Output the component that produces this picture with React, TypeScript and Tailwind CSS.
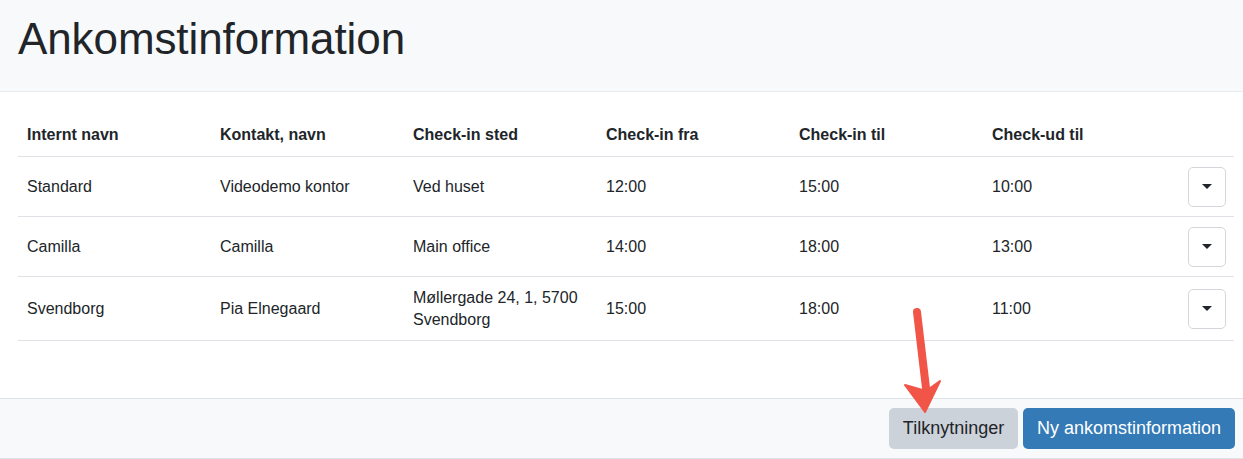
const rows = [
  { name: "Standard", contact: "Videodemo kontor", place: "Ved huset", from: "12:00", to: "15:00", out: "10:00" },
  { name: "Camilla", contact: "Camilla", place: "Main office", from: "14:00", to: "18:00", out: "13:00" },
  { name: "Svendborg", contact: "Pia Elnegaard", place: "Møllergade 24, 1, 5700 Svendborg", from: "15:00", to: "18:00", out: "11:00" },
];

const headers = ["Internt navn", "Kontakt, navn", "Check-in sted", "Check-in fra", "Check-in til", "Check-ud til"];

export default function App() {
  return (
    <div
      className="relative flex h-[459px] w-full flex-col bg-white text-[#212529]"
      style={{ fontFamily: '"Liberation Sans", Arial, sans-serif' }}
    >
      {/* Header */}
      <div className="h-[92px] shrink-0 border-b border-[#e9ecef] bg-[#f8f9fb] px-[18px] pt-[13px]">
        <h1 className="text-[44px] leading-[1.2] font-normal tracking-[-0.1px]">Ankomstinformation</h1>
      </div>

      {/* Body */}
      <div className="flex-1 pl-[18px] pr-[9px] pt-[20px]">
        <table className="w-full table-fixed border-collapse text-[16px]">
          <colgroup>
            <col className="w-[193px]" />
            <col className="w-[193px]" />
            <col className="w-[193px]" />
            <col className="w-[193px]" />
            <col className="w-[193px]" />
            <col className="w-[193px]" />
            <col />
          </colgroup>
          <thead>
            <tr className="border-b border-[#dee2e6]">
              {headers.map((h) => (
                <th key={h} className="px-[9px] pt-[12px] pb-[10px] text-left leading-[22px] font-bold">
                  {h}
                </th>
              ))}
              <th />
            </tr>
          </thead>
          <tbody>
            {rows.map((r) => (
              <tr key={r.name} className="border-b border-[#dee2e6]">
                <td className="px-[9px] py-[9.5px] align-middle leading-[22px]">{r.name}</td>
                <td className="px-[9px] py-[9.5px] align-middle leading-[22px]">{r.contact}</td>
                <td className="px-[9px] py-[9.5px] align-middle leading-[22px]">{r.place}</td>
                <td className="px-[9px] py-[9.5px] align-middle leading-[22px]">{r.from}</td>
                <td className="px-[9px] py-[9.5px] align-middle leading-[22px]">{r.to}</td>
                <td className="px-[9px] py-[9.5px] align-middle leading-[22px]">{r.out}</td>
                <td className="py-[9.5px] pr-[8px] align-middle">
                  <div className="flex justify-end">
                    <button className="flex h-[40px] w-[38px] items-center justify-center rounded-[5px] border border-[#d3d7dc] bg-white">
                      <span className="h-0 w-0 border-x-[5px] border-t-[5px] border-x-transparent border-t-[#212529]" />
                    </button>
                  </div>
                </td>
              </tr>
            ))}
          </tbody>
        </table>
      </div>

      {/* Footer */}
      <div className="flex h-[61px] shrink-0 items-center justify-end gap-[5px] border-y border-[#dee2e6] bg-[#f8f9fa] pr-[8px]">
        <button className="flex h-[41px] w-[129px] items-center justify-center rounded-[5px] bg-[#ccd2d9] text-[18px] text-[#212529]">
          Tilknytninger
        </button>
        <button className="flex h-[41px] w-[212px] items-center justify-center rounded-[5px] bg-[#337ab7] text-[18px] text-white">
          Ny ankomstinformation
        </button>
      </div>

      {/* Annotation arrow */}
      <svg className="pointer-events-none absolute left-[895px] top-[300px]" width="60" height="120" viewBox="0 0 60 120">
        <line x1="22" y1="12" x2="31" y2="88" stroke="#f05548" strokeWidth="8" strokeLinecap="round" />
        <polygon points="10,85 31,91 45,81 30,112" fill="#f05548" strokeLinejoin="round" stroke="#f05548" strokeWidth="2" />
      </svg>
    </div>
  );
}
